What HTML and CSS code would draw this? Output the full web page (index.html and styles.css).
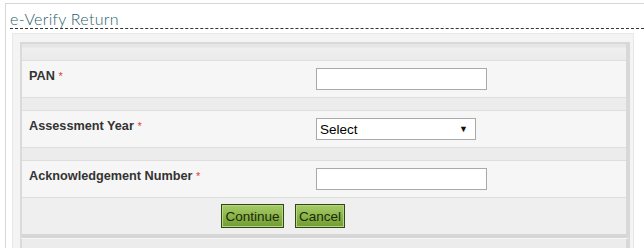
FILE: index.html
```html
<!DOCTYPE html>
<html lang="en">
<head>
<meta charset="utf-8">
<title>e-Verify Return</title>
<link rel="stylesheet" href="styles.css">
</head>
<body>
<div class="frame">
  <h1 class="title">e-Verify Return</h1>
  <div class="panel">
    <div class="form">
      <div class="band band-top"></div>
      <div class="row">
        <label class="label" for="pan">PAN <span class="req">*</span></label>
        <div class="field"><input id="pan" class="text" type="text"></div>
      </div>
      <div class="band"></div>
      <div class="row">
        <label class="label" for="ay">Assessment Year <span class="req">*</span></label>
        <div class="field">
          <div class="select-wrap">
            <select id="ay" class="select"><option>Select</option></select>
            <span class="arrow">&#9660;</span>
          </div>
        </div>
      </div>
      <div class="band"></div>
      <div class="row">
        <label class="label" for="ack">Acknowledgement Number <span class="req">*</span></label>
        <div class="field"><input id="ack" class="text" type="text"></div>
      </div>
      <div class="actions">
        <button class="btn btn-continue" type="button">Continue</button>
        <button class="btn btn-cancel" type="button">Cancel</button>
      </div>
    </div>
    <div class="form-next"></div>
  </div>
</div>
</body>
</html>
```
FILE: styles.css
```css
html, body {
  margin: 0;
  padding: 0;
  background: #ffffff;
  overflow: hidden;
}
body {
  font-family: "Liberation Sans", Arial, sans-serif;
  height: 248px;
}
.frame {
  margin: 3px 0 0 5px;
  border-top: 1px solid #d6d6d6;
  border-left: 1px solid #d6d6d6;
  padding: 5px 0 0 4px;
  height: 245px;
  box-sizing: border-box;
  overflow: hidden;
}
.title {
  margin: 0;
  font-family: Lato, "Open Sans", sans-serif;
  font-weight: 300;
  font-size: 16px;
  line-height: 19px;
  color: #2a5f6b;
  border-bottom: 1px dashed #333333;
  letter-spacing: 0.3px;
}
.panel {
  margin: 4px 0 0 2px;
  width: 622px;
  background: #f4f4f4;
  border: 1px solid #e8e8e8;
  border-bottom: 0;
  padding: 8px 0 0 7px;
  height: 215px;
  box-sizing: border-box;
  overflow: hidden;
}
.form {
  width: 610px;
  border-top: 2px solid #d8d8d8;
  border-left: 2px solid #dadada;
  border-right: 4px solid #d8d8d8;
  box-sizing: border-box;
}
.band {
  height: 12px;
  background: #ececec;
  border-top: 1px solid #dedede;
  border-bottom: 1px solid #dedede;
}
.band-top {
  height: 16px;
  border-top: 0;
  background: linear-gradient(#e6e6e6 0, #e6e6e6 3px, #efefef 4px, #ebebeb 100%);
}
.row {
  display: grid;
  grid-template-columns: 294px 1fr;
  height: 36px;
  background: #f6f6f6;
}
.label {
  padding: 8px 0 0 7px;
  font-size: 12.7px;
  line-height: 14px;
  font-weight: bold;
  color: #333333;
}
.req {
  font-weight: normal;
  color: #e03c3c;
  font-size: 11px;
}
.field {
  padding-top: 7px;
}
.text {
  display: block;
  margin: 0;
  width: 171px;
  height: 22px;
  box-sizing: border-box;
  border: 1px solid #a9a9a9;
  background: #ffffff;
  padding: 0 3px;
}
.select-wrap {
  position: relative;
  width: 160px;
  height: 22px;
}
.select {
  appearance: none;
  -webkit-appearance: none;
  display: block;
  margin: 0;
  width: 160px;
  height: 22px;
  box-sizing: border-box;
  border: 1px solid #a9a9a9;
  border-radius: 0;
  background: #ffffff;
  padding: 0 0 0 3px;
  font-family: "Liberation Sans", Arial, sans-serif;
  font-size: 13.5px;
  color: #000000;
}
.arrow {
  position: absolute;
  right: 8px;
  top: 6px;
  font-size: 9px;
  line-height: 10px;
  color: #111111;
  pointer-events: none;
}
.actions {
  display: flex;
  gap: 11px;
  padding: 6px 0 0 199px;
  box-sizing: border-box;
  background: #efefef;
  border-top: 1px solid #dedede;
  border-bottom: 4px solid #d6d6d6;
  height: 41px;
}
.btn {
  height: 24px;
  margin: 0;
  padding: 0;
  font-family: "Liberation Sans", Arial, sans-serif;
  font-size: 13.5px;
  color: #1c2a0e;
  background: linear-gradient(#a6cb68, #8cb64a 50%, #6f9b30);
  border: 1px solid #2f4712;
  box-shadow: inset 0 0 0 1px #b7d583;
  border-radius: 0;
}
.btn-continue {
  width: 63px;
}
.btn-cancel {
  width: 50px;
}
.form-next {
  width: 610px;
  height: 12px;
  border-top: 1px solid #f7f7f7;
  border-left: 2px solid #dadada;
  border-right: 4px solid #d8d8d8;
  background: #ececec;
  box-sizing: border-box;
}
```
